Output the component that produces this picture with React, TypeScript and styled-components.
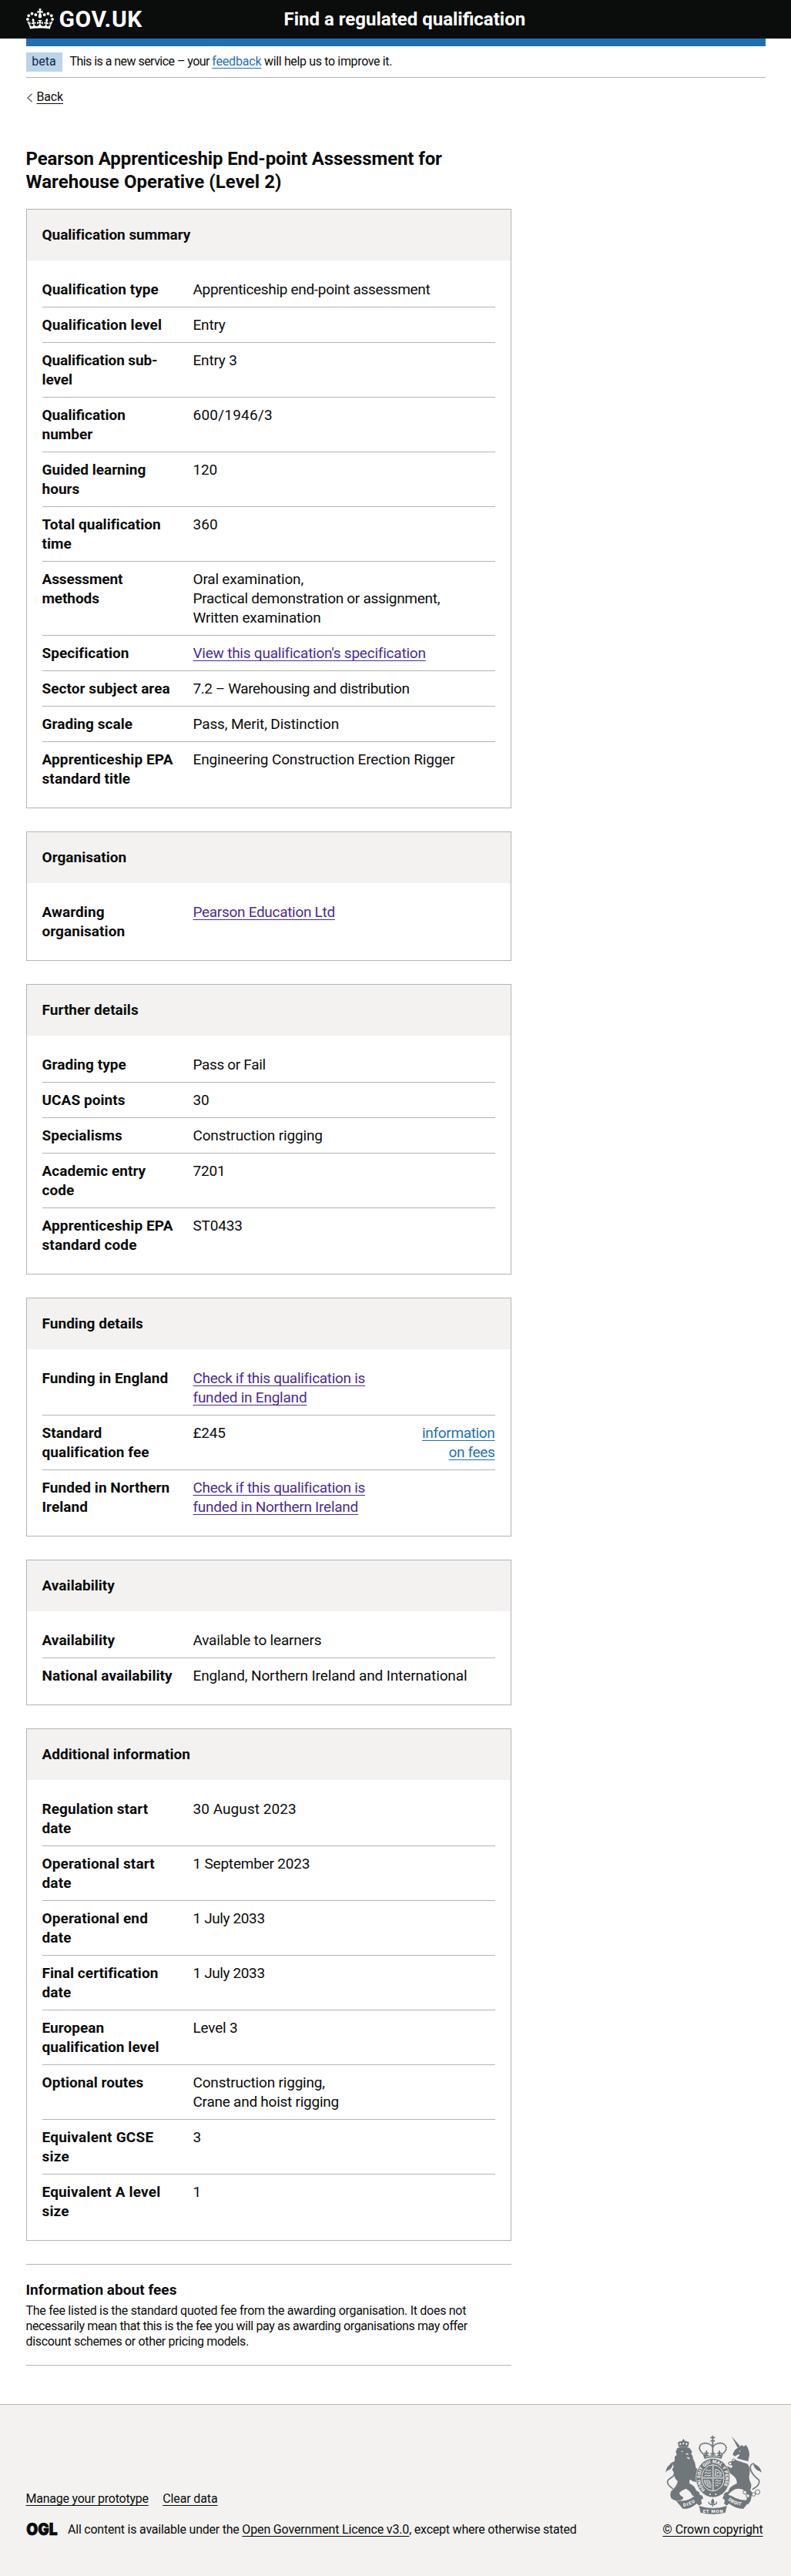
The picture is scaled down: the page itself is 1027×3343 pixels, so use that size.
import React from 'react';
import styled, { createGlobalStyle } from 'styled-components';

const INK = '#0b0c0c';
const BLUE = '#1d70b8';
const PURPLE = '#4c2c92';
const LINE = '#b1b4b6';
const PALE = '#f3f2f1';
const CREST = '#6f777b';

const Global = createGlobalStyle`
  body {
    margin: 0;
    background: #fff;
    color: ${INK};
    font-family: Roboto, "Liberation Sans", sans-serif;
    font-size: 16px;
    line-height: 20px;
  }
  *, *::before, *::after { box-sizing: border-box; }
  h1, h2, p, dl, dt, dd { margin: 0; }
`;

/* Letter spacing in hundredths of an em. */
const T = styled.span<{ $t: number }>`
  letter-spacing: ${(p) => p.$t / 100}em;
`;

const Link = styled.a<{ $color?: string; $t?: number }>`
  color: ${(p) => p.$color ?? INK};
  letter-spacing: ${(p) => (p.$t ?? -1) / 100}em;
  text-decoration: underline;
  text-decoration-thickness: 1px;
  text-decoration-skip-ink: none;
  text-underline-offset: 0.1578em;
`;

const Container = styled.div`
  width: 960px;
  margin: 0 auto;
`;

const HeaderBar = styled.header`
  height: 50px;
  background: ${INK};
  color: #fff;
`;

const HeaderInner = styled(Container)`
  display: flex;
  align-items: flex-start;
  height: 50px;
`;

const Logo = styled.a`
  display: flex;
  width: 335px;
  padding-top: 7px;
  color: #fff;
  svg { display: block; margin: 4px 7px 0 0; }
`;

const LogoText = styled.span`
  font-size: 30px;
  font-weight: 700;
  line-height: 35px;
  letter-spacing: 0.021em;
`;

const ServiceName = styled.a`
  padding-top: 10px;
  font-size: 24px;
  font-weight: 700;
  line-height: 30px;
`;

const BlueBar = styled(Container)`
  height: 10px;
  background: ${BLUE};
`;

const PhaseBanner = styled(Container)`
  display: flex;
  height: 41px;
  padding-top: 8px;
  border-bottom: 1px solid ${LINE};
  line-height: 23px;
`;

const Tag = styled.strong`
  width: 47px;
  height: 25px;
  margin-right: 10px;
  background: #bbd4ea;
  color: #0c2d4a;
  font-weight: 400;
  text-align: center;
`;

const BackLink = styled.div`
  display: flex;
  align-items: flex-start;
  margin: 15px 0 55px;
  svg { display: block; margin: 5px 6px 0 1px; }
`;

const Column = styled.div`
  width: 630px;
`;

const PageTitle = styled.h1`
  margin-bottom: 20px;
  font-size: 24px;
  font-weight: 700;
  line-height: 30px;
`;

const Card = styled.section`
  margin-bottom: 30px;
  border: 1px solid ${LINE};
`;

const CardHead = styled.div`
  padding: 20px 20px 21px;
  background: ${PALE};
`;

const CardTitle = styled.h2<{ $t?: number }>`
  font-size: 19px;
  font-weight: 700;
  line-height: 25px;
  letter-spacing: ${(p) => (p.$t ?? 0.2) / 100}em;
`;

const Rows = styled.dl`
  padding: 15px 20px;
  font-size: 19px;
  line-height: 25px;
`;

const Row = styled.div`
  display: flex;
  padding: 10px 0;
  border-bottom: 1px solid ${LINE};
  &:last-child { border-bottom: 0; }
`;

const Key = styled.dt<{ $t: number }>`
  flex: 0 0 196px;
  padding-right: 22px;
  font-weight: 700;
  letter-spacing: ${(p) => p.$t / 100}em;
`;

const Value = styled.dd<{ $t: number }>`
  flex: 1;
  letter-spacing: ${(p) => p.$t / 100}em;
`;

const Action = styled.dd`
  flex: 0 0 118px;
  padding-left: 20px;
  text-align: right;
`;

const Fees = styled.section`
  margin-bottom: 50px;
  padding: 20px 0;
  border-top: 1px solid ${LINE};
  border-bottom: 1px solid ${LINE};
  h2 { margin-bottom: 5px; }
`;

const Footer = styled.footer`
  padding: 40px 0 50px;
  border-top: 1px solid ${LINE};
  background: ${PALE};
`;

const FooterInner = styled(Container)`
  display: flex;
  justify-content: space-between;
  align-items: flex-end;
`;

const FooterLinks = styled.div`
  display: flex;
  gap: 18.5px;
  margin-bottom: 20px;
`;

const Licence = styled.div`
  display: flex;
  svg { display: block; margin-right: 13.5px; overflow: visible; }
`;

const Copyright = styled.div`
  display: flex;
  flex-direction: column;
  align-items: center;
  svg { display: block; margin: -6px 0 6px; }
`;

type RowData = { k: React.ReactNode; kt?: number; v: React.ReactNode; t?: number; action?: React.ReactNode };

const br = (...lines: [string, number][]) =>
  lines.map(([s, t], i) => (
    <React.Fragment key={s}>
      {i > 0 && <br />}
      <T $t={t}>{s}</T>
    </React.Fragment>
  ));

const cards: { title: string; tt?: number; rows: RowData[] }[] = [
  {
    title: 'Qualification summary',
    tt: -0.2,
    rows: [
      { k: 'Qualification type', v: 'Apprenticeship end-point assessment', t: -1.65 },
      { k: 'Qualification level', kt: 0.6, v: 'Entry' },
      { k: 'Qualification sub-level', kt: -0.6, v: 'Entry 3' },
      { k: 'Qualification number', kt: 0, v: '600/1946/3', t: 1.2 },
      { k: 'Guided learning hours', kt: 0.1, v: '120', t: -1 },
      { k: 'Total qualification time', kt: 0.2, v: '360', t: 0.5 },
      {
        k: 'Assessment methods',
        kt: -0.5,
        v: br(['Oral examination,', -1], ['Practical demonstration or assignment,', -1.55], ['Written examination', -1]),
      },
      { k: 'Specification', v: <Link href="#" $color={PURPLE} $t={-1.2}>View this qualification's specification</Link> },
      { k: 'Sector subject area', v: '7.2 – Warehousing and distribution', t: -2.25 },
      { k: 'Grading scale', v: 'Pass, Merit, Distinction', t: -0.75 },
      { k: 'Apprenticeship EPA standard title', kt: 0.55, v: 'Engineering Construction Erection Rigger', t: -0.75 },
    ],
  },
  {
    title: 'Organisation',
    rows: [{ k: 'Awarding organisation', v: <Link href="#" $color={PURPLE} $t={-1.6}>Pearson Education Ltd</Link> }],
  },
  {
    title: 'Further details',
    rows: [
      { k: 'Grading type', v: 'Pass or Fail', t: -1.8 },
      { k: 'UCAS points', v: '30' },
      { k: 'Specialisms', v: 'Construction rigging', t: -0.9 },
      { k: 'Academic entry code', v: '7201' },
      { k: 'Apprenticeship EPA standard code', kt: 0.55, v: 'ST0433' },
    ],
  },
  {
    title: 'Funding details',
    rows: [
      {
        k: 'Funding in England',
        v: (
          <Link href="#" $color={PURPLE} $t={-1.6}>
            Check if this qualification is<br /><T $t={-1.2}>funded in England</T>
          </Link>
        ),
      },
      {
        k: 'Standard qualification fee',
        v: '£245',
        action: <Link href="#" $color={BLUE} $t={-1.8}>information on fees</Link>,
      },
      {
        k: 'Funded in Northern Ireland',
        v: (
          <Link href="#" $color={PURPLE} $t={-1.6}>
            Check if this qualification is<br /><T $t={-1.3}>funded in Northern Ireland</T>
          </Link>
        ),
      },
    ],
  },
  {
    title: 'Availability',
    rows: [
      { k: 'Availability', v: 'Available to learners' },
      { k: 'National availability', v: 'England, Northern Ireland and International', t: -0.65 },
    ],
  },
  {
    title: 'Additional information',
    rows: [
      { k: 'Regulation start date', v: '30 August 2023', t: 0.3 },
      { k: 'Operational start date', kt: 0.8, v: '1 September 2023', t: -1.1 },
      { k: 'Operational end date', kt: 0.8, v: '1 July 2033', t: -2 },
      { k: 'Final certification date', v: '1 July 2033', t: -2 },
      { k: 'European qualification level', v: 'Level 3' },
      { k: 'Optional routes', v: br(['Construction rigging,', -1], ['Crane and hoist rigging', -1.3]) },
      { k: 'Equivalent GCSE size', kt: 1.2, v: '3' },
      { k: 'Equivalent A level size', kt: 0.8, v: '1' },
    ],
  },
];

const Crown = () => (
  <svg width="36" height="27" viewBox="0 0 132 97" fill="#fff" aria-hidden="true">
    <path d="M25 30.2c3.5 1.5 7.7-.2 9.1-3.7 1.5-3.6-.2-7.8-3.9-9.2-3.6-1.4-7.6.3-9.1 3.9-1.4 3.5.3 7.5 3.9 9zM9 39.5c3.6 1.5 7.8-.2 9.2-3.7 1.5-3.6-.2-7.8-3.9-9.1-3.6-1.5-7.6.2-9.1 3.8-1.4 3.5.3 7.5 3.8 9zM4.4 57.2c3.5 1.5 7.7-.2 9.1-3.8 1.5-3.6-.2-7.7-3.9-9.1-3.5-1.5-7.6.3-9.1 3.8-1.4 3.5.3 7.6 3.9 9.1zm38.3-21.4c3.5 1.5 7.7-.2 9.1-3.8 1.5-3.6-.2-7.7-3.9-9.1-3.6-1.5-7.6.3-9.1 3.8-1.3 3.6.4 7.7 3.9 9.1zm64.4-5.6c-3.6 1.5-7.8-.2-9.1-3.7-1.5-3.6.2-7.8 3.8-9.2 3.6-1.4 7.7.3 9.2 3.9 1.3 3.5-.4 7.5-3.9 9zm15.9 9.3c-3.6 1.5-7.7-.2-9.1-3.7-1.5-3.6.2-7.8 3.7-9.1 3.6-1.5 7.7.2 9.2 3.8 1.5 3.5-.3 7.5-3.8 9zm4.7 17.7c-3.6 1.5-7.8-.2-9.2-3.8-1.5-3.6.2-7.7 3.9-9.1 3.6-1.5 7.7.3 9.2 3.8 1.3 3.5-.4 7.6-3.9 9.1zM89.3 35.8c-3.6 1.5-7.8-.2-9.2-3.8-1.4-3.6.2-7.7 3.9-9.1 3.6-1.5 7.7.3 9.2 3.8 1.4 3.6-.3 7.7-3.9 9.1zM69.7 17.7l8.9 4.7V9.3l-8.9 2.8c-.2-.3-.5-.6-.9-.9L72.4 0H59.6l3.5 11.2c-.3.3-.6.5-.9.9l-8.8-2.8v13.1l8.8-4.7c.3.3.6.7.9.9l-5 15.4v.1c-.2.8-.4 1.6-.4 2.4 0 4.1 3.1 7.5 7 8.1h.2c.3 0 .7.1 1 .1.4 0 .7 0 1-.1h.2c4-.6 7.1-4.1 7.1-8.1 0-.8-.1-1.7-.4-2.4V34l-5.1-15.4c.4-.2.7-.6 1-.9zM66 92.8c16.9 0 32.8 1.1 47.1 3.2 4-16.9 8.9-26.7 14-33.5l-9.6-3.4c1 4.9 1.1 7.2 0 10.2-1.5-1.4-3-4.3-4.2-8.7L108.6 76c2.8-2 5-3.2 7.5-3.3-4.4 9.4-10 11.9-13.6 11.2-4.3-.8-6.3-4.6-5.6-7.9 1-4.7 5.7-5.9 8-.5 4.3-8.7-3-11.4-7.6-8.8 7.1-7.2 7.9-13.5 2.1-21.1-8 6.1-8.1 12.3-4.5 20.8-4.7-5.4-12.1-2.5-9.5 6.2 3.4-5.2 7.9-2 7.2 3.1-.6 4.3-6.4 7.8-13.5 7.2-10.3-.9-10.9-8-11.2-13.8 2.5-.5 7.1 1.8 11 7.3L80.2 60c-4.1 4.4-8 5.3-12.3 5.4 1.4-4.4 8-11.6 8-11.6H55.5s6.4 7.2 7.9 11.6c-4.2-.1-8-1-12.3-5.4l1.4 16.4c3.9-5.5 8.5-7.7 10.9-7.3-.3 5.8-.9 12.8-11.1 13.8-7.2.6-12.9-2.9-13.5-7.2-.7-5 3.8-8.3 7.1-3.1 2.7-8.7-4.6-11.6-9.4-6.2 3.7-8.5 3.6-14.7-4.6-20.8-5.8 7.6-5 13.9 2.2 21.1-4.7-2.6-11.9.1-7.7 8.8 2.3-5.5 7.1-4.2 8.1.5.7 3.3-1.3 7.1-5.7 7.9-3.5.7-9-1.8-13.5-11.2 2.5.1 4.7 1.3 7.5 3.3l-4.7-15.4c-1.2 4.4-2.7 7.2-4.3 8.7-1.1-3-.9-5.3 0-10.2l-9.5 3.4c5 6.9 9.9 16.7 14 33.5 14.8-2.1 30.8-3.2 47.7-3.2z" />
  </svg>
);

const Ogl = () => (
  <svg width="41" height="20" viewBox="0 0 41 20" aria-hidden="true">
    <text x="0.3" y="16.5" fontFamily="Inter, sans-serif" fontWeight="900" fontSize="21.8" textLength="40.4" lengthAdjust="spacingAndGlyphs" fill={INK} stroke={INK} strokeWidth="0.7">OGL</text>
  </svg>
);

const Arms = () => (
  <svg width="136" height="112" viewBox="0 0 408 336" aria-hidden="true">
    <defs>
      <path id="motto" d="M173 228 A49 58 0 1 1 233 228" />
      <path id="scrollL" d="M88 294 Q116 292 142 270" />
      <path id="scrollR" d="M262 268 Q284 288 318 290" />
    </defs>

    {/* lion and unicorn */}
    <g fill={CREST}>
      <path d="M70 62 L66 46 Q70 38 80 40 L84 36 L88 30 L93 36 L97 40 Q108 38 110 46 L106 62 Z" />
      <path d="M64 66 Q88 58 112 66 L122 80 L118 88 Q126 96 126 108 Q136 124 136 142 L152 158 Q156 170 148 176 L154 196 Q146 206 136 198 Q122 196 114 188 Q108 196 112 204 Q134 214 138 232 Q152 236 152 248 L134 256 L122 250 Q118 236 98 224 Q84 228 72 240 Q72 250 88 258 Q86 270 70 270 Q50 272 40 260 Q34 248 40 234 Q60 218 66 196 Q48 178 50 160 L44 150 L50 138 L46 126 L54 114 L54 100 L62 92 L58 80 Z" />
      <path d="M276 20 L308 58 L300 66 Z" />
      <path d="M298 66 L316 54 L322 60 L332 54 Q344 70 345 92 L340 118 L296 106 Q306 96 308 90 Q296 90 290 98 L280 92 Q284 74 298 66 Z" />
      <path d="M292 112 L336 126 Q350 142 346 164 Q340 184 350 202 Q356 214 348 228 L356 240 L350 270 L340 286 L330 278 L338 250 Q334 238 320 228 Q296 220 282 230 Q266 240 262 250 L244 250 Q246 238 262 236 Q266 216 296 204 Q298 184 278 170 L256 154 Q244 146 250 136 Q262 134 274 144 L280 136 L262 126 Q264 116 276 118 Z" />
    </g>
    <g fill={PALE}>
      <path d="M96 88 q8 -5 12 2 q-6 4 -12 -2Z M100 102 q10 -2 14 6 q-8 2 -14 -6Z M78 78 q6 -3 9 2 q-5 2 -9 -2Z" />
      <path d="M296 108 L338 122 L336 127 L294 113 Z" />
      <circle cx="308" cy="78" r="2.5" />
      <circle cx="76" cy="50" r="3.5" />
      <circle cx="88" cy="48" r="3.5" />
      <circle cx="100" cy="50" r="3.5" />
    </g>
    <g fill="none" stroke={CREST} strokeWidth="5" strokeLinecap="round">
      <path d="M46 224 Q20 206 28 190 Q50 176 62 158 Q72 128 52 122 Q44 122 38 130" />
      <path d="M358 226 Q390 208 382 190 Q358 172 350 152 Q344 128 362 126" />
    </g>
    <path d="M18 162 Q22 132 48 124 Q46 142 34 150 Q24 152 18 162Z M360 126 Q388 136 393 162 Q386 154 376 152 Q362 144 360 126Z" fill={CREST} />
    <g fill="none" stroke={CREST} strokeWidth="3">
      <circle cx="327" cy="238" r="7" fill={PALE} />
      <circle cx="339" cy="252" r="7" fill={PALE} />
      <circle cx="361" cy="246" r="7" />
      <circle cx="377" cy="237" r="9" />
      <circle cx="284" cy="114" r="6" />
      <circle cx="270" cy="126" r="6" fill={PALE} />
    </g>

    {/* royal crown */}
    <g fill="none" stroke={CREST} strokeLinecap="round">
      <path d="M170 92 Q142 72 154 54 Q168 42 188 50 Q200 56 202 64 Q204 56 216 50 Q238 42 250 54 Q264 72 236 92" strokeWidth="6" strokeDasharray="1 7" />
      <path d="M170 92 Q142 72 154 54 Q168 42 188 50 Q200 56 202 64 Q204 56 216 50 Q238 42 250 54 Q264 72 236 92" strokeWidth="2.5" />
      <path d="M202 20 V82 M195 25 H209 M196 38 H208" strokeWidth="5.5" />
      <path d="M178 98 V78 M171 86 H185 M203 98 V80 M195 88 H211 M228 98 V78 M221 86 H235" strokeWidth="5.5" />
    </g>
    <path d="M162 84 L168 94 L178 90 L190 96 L203 90 L216 96 L228 90 L238 94 L244 84 L236 108 Q203 98 170 108 Z" fill={CREST} />
    <path d="M174 101 Q203 92 232 101" fill="none" stroke={PALE} strokeWidth="2" />

    {/* garter and shield */}
    <ellipse cx="203" cy="182" rx="66" ry="76" fill={CREST} stroke={PALE} strokeWidth="2" />
    <ellipse cx="203" cy="182" rx="43" ry="51" fill={CREST} stroke={PALE} strokeWidth="3" />
    <path d="M203 132 V232 M161 182 H245" stroke={PALE} strokeWidth="5" />
    <path d="M203 132 V232 M161 182 H245" stroke={CREST} strokeWidth="1.5" />
    <g stroke={PALE} strokeWidth="3" fill="none">
      <path d="M174 154 l7 -4 6 5 8 -4 M170 164 l8 -4 8 5 9 -4 M170 174 l8 -3 8 3 9 -3" />
      <path d="M214 148 q14 4 20 14 V174 H212 Z M218 168 q2 -12 8 -8 q6 2 2 8" />
      <path d="M168 192 q6 24 26 28 Q198 204 188 192 Z M176 194 v12 M182 194 v20 M188 196 v22" strokeWidth="2.5" />
      <path d="M212 194 l7 -4 7 5 9 -4 M211 204 l8 -4 7 5 8 -4 M211 214 l7 -4 7 4" />
    </g>
    <text fill={PALE} fontFamily="Roboto, sans-serif" fontWeight="900" fontSize="18" textLength="250">
      <textPath href="#motto">HONI SOIT QUI MAL Y PENSE</textPath>
    </text>
    <g fill={PALE}>
      <circle cx="192" cy="246" r="3" />
      <circle cx="214" cy="246" r="3" />
    </g>

    {/* motto scroll */}
    <path d="M58 270 Q92 276 118 262 Q140 244 160 250 L166 262 Q152 264 160 282 L150 290 L140 282 Q112 306 86 302 Z" fill={CREST} />
    <path d="M348 268 Q318 272 290 260 Q266 244 246 250 L240 262 Q254 266 246 282 L256 290 L266 282 Q294 304 322 302 Z" fill={CREST} />
    <path d="M148 290 Q204 308 258 290 L252 318 Q204 330 154 318 Z" fill={CREST} stroke={PALE} strokeWidth="1.5" />
    <path d="M202 262 q-9 10 -5 20 h10 q4 -10 -5 -20Z" fill={CREST} />
    <path d="M202 276 V294 M193 286 H211 M197 284 q-14 0 -9 -9 M207 284 q14 0 9 -9" fill="none" stroke={CREST} strokeWidth="4" />
    <g fill={PALE} fontFamily="Roboto, sans-serif" fontWeight="900" fontSize="18">
      <text textLength="50"><textPath href="#scrollL">DIEU</textPath></text>
      <text textLength="56"><textPath href="#scrollR">DROIT</textPath></text>
      <text x="164" y="318" textLength="78">ET MON</text>
    </g>
  </svg>
);

export default function App() {
  return (
    <>
      <Global />
      <HeaderBar>
        <HeaderInner>
          <Logo>
            <Crown />
            <LogoText>GOV.UK</LogoText>
          </Logo>
          <ServiceName>Find a regulated qualification</ServiceName>
        </HeaderInner>
      </HeaderBar>
      <BlueBar />
      <PhaseBanner>
        <Tag>beta</Tag>
        <p>
          <T $t={-3.4}>This is a new service – your </T>
          <Link href="#" $color={BLUE} $t={-1.2}>feedback</Link>
          <T $t={-2.2}> will help us to improve it.</T>
        </p>
      </PhaseBanner>
      <Container>
        <BackLink>
          <svg width="7" height="12" viewBox="0 0 7 12" fill="none" stroke="#505a5f" strokeWidth="1.2" aria-hidden="true">
            <path d="M6.5 .7 L1 6 L6.5 11.3" />
          </svg>
          <Link href="#">Back</Link>
        </BackLink>
        <Column>
          <PageTitle>
            {br(['Pearson Apprenticeship End-point Assessment for', -0.5], ['Warehouse Operative (Level 2)', 0.3])}
          </PageTitle>
          {cards.map((card) => (
            <Card key={card.title}>
              <CardHead>
                <CardTitle $t={card.tt}>{card.title}</CardTitle>
              </CardHead>
              <Rows>
                {card.rows.map((row, i) => (
                  <Row key={i}>
                    <Key $t={row.kt ?? 0.3}>{row.k}</Key>
                    <Value $t={row.t ?? -1}>{row.v}</Value>
                    {row.action && <Action>{row.action}</Action>}
                  </Row>
                ))}
              </Rows>
            </Card>
          ))}
          <Fees>
            <CardTitle>Information about fees</CardTitle>
            <p>
              {br(
                ['The fee listed is the standard quoted fee from the awarding organisation. It does not', -1.8],
                ['necessarily mean that this is the fee you will pay as awarding organisations may offer', -2.3],
                ['discount schemes or other pricing models.', -2.1],
              )}
            </p>
          </Fees>
        </Column>
      </Container>
      <Footer>
        <FooterInner>
          <div>
            <FooterLinks>
              <Link href="#" $t={-1.5}>Manage your prototype</Link>
              <Link href="#" $t={-0.8}>Clear data</Link>
            </FooterLinks>
            <Licence>
              <Ogl />
              <span>
                <T $t={-1.4}>All content is available under the </T>
                <Link href="#" $t={-0.96}>Open Government Licence v3.0</Link>
                <T $t={-1.4}>, except where otherwise stated</T>
              </span>
            </Licence>
          </div>
          <Copyright>
            <Arms />
            <Link href="#" $t={-0.8}>© Crown copyright</Link>
          </Copyright>
        </FooterInner>
      </Footer>
    </>
  );
}
